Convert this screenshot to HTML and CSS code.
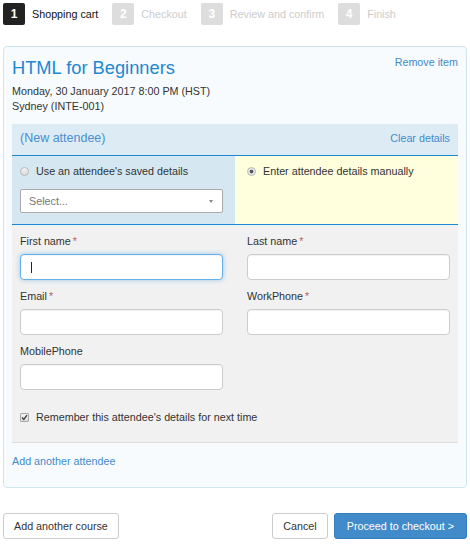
FILE: index.html
```html
<!DOCTYPE html>
<html lang="en">
<head>
  <meta charset="UTF-8" />
  <meta name="viewport" content="width=device-width, initial-scale=1.0" />
  <title>Shopping cart</title>
  <link rel="stylesheet" href="styles.css">
</head>
<body>
  <div class="steps">
    <div class="step active"><span class="step-num">1</span>Shopping cart</div>
    <div class="step"><span class="step-num">2</span>Checkout</div>
    <div class="step"><span class="step-num">3</span>Review and confirm</div>
    <div class="step"><span class="step-num">4</span>Finish</div>
  </div>

  <div class="cart-item">
    <div class="item-head">
      <h2 class="course-title">HTML for Beginners</h2>
      <a class="link remove-link" href="#">Remove item</a>
    </div>
    <div class="meta first">Monday, 30 January 2017 8:00 PM (HST)</div>
    <div class="meta">Sydney (INTE-001)</div>

    <div class="attendee">
      <div class="attendee-head">
        <span class="attendee-name">(New attendee)</span>
        <a class="link" href="#">Clear details</a>
      </div>

      <div class="source">
        <div class="source-pane saved">
          <label class="choice"><span class="radio"></span>Use an attendee's saved details</label>
          <div class="select">
            <span>Select...</span>
            <span class="select-arrow"></span>
          </div>
        </div>
        <div class="source-pane manual">
          <label class="choice"><span class="radio checked"></span>Enter attendee details manually</label>
        </div>
      </div>

      <!-- attendee fields -->
      <div class="details">
        <div class="field-grid">
          <div class="field">
            <label>First name<span class="req">*</span></label>
            <span class="input-wrap has-cursor"><input type="text" class="input focused" /></span>
          </div>
          <div class="field">
            <label>Last name<span class="req">*</span></label>
            <input type="text" class="input" />
          </div>
          <div class="field">
            <label>Email<span class="req">*</span></label>
            <input type="text" class="input" />
          </div>
          <div class="field">
            <label>WorkPhone<span class="req">*</span></label>
            <input type="text" class="input" />
          </div>
          <div class="field">
            <label>MobilePhone</label>
            <input type="text" class="input" />
          </div>
        </div>
        <label class="choice remember">
          <span class="checkbox">
            <svg width="7" height="7" viewBox="0 0 7 7"><path d="M1 3.6 L2.8 5.4 L6 1.2" fill="none" stroke="#444" stroke-width="1.4"/></svg>
          </span>Remember this attendee's details for next time
        </label>
      </div>
    </div>

    <a class="link add-attendee" href="#">Add another attendee</a>
  </div>

  <div class="actions">
    <button class="btn">Add another course</button>
    <div class="actions-right">
      <button class="btn">Cancel</button>
      <button class="btn btn-primary">Proceed to checkout &gt;</button>
    </div>
  </div>
</body>
</html>
```

FILE: styles.css
```css
body {
  margin: 0;
  padding: 3px;
  font-family: "Liberation Sans", Arial, sans-serif;
  font-size: 10.75px;
  color: #333;
  background: #fff;
}

a {
  text-decoration: none;
}

.link {
  color: #428bca;
}

/* progress steps */
.steps {
  display: flex;
  height: 22px;
}

.step {
  display: flex;
  align-items: center;
  flex: none;
  margin-right: 14px;
  line-height: 22px;
  color: #ccc;
}

.step-num {
  flex: none;
  width: 22px;
  height: 22px;
  margin-right: 7px;
  border-radius: 2px;
  background: #ddd;
  color: #fff;
  font-size: 12px;
  font-weight: bold;
  text-align: center;
}

.step.active {
  color: #111;
}

.step.active .step-num {
  background: #222;
}

/* cart item card */
.cart-item {
  margin-top: 21px;
  padding: 8px;
  border: 1px solid #cfe5f0;
  border-radius: 4px;
  background: #f7fbfd;
}

.item-head {
  display: flex;
  justify-content: space-between;
  align-items: flex-start;
}

.course-title {
  margin: 0;
  font-size: 18.3px;
  font-weight: normal;
  line-height: 26px;
  color: #1e88d0;
}

.remove-link {
  padding-top: 1px;
  line-height: 13px;
}

.meta {
  line-height: 15px;
}

.meta.first {
  margin-top: 3px;
}

.attendee {
  margin-top: 10px;
}

.attendee-head {
  display: flex;
  justify-content: space-between;
  align-items: baseline;
  padding: 7px 8px 9px;
  background: #ddebf5;
  border-bottom: 1px solid #1a88d0;
}

.attendee-name {
  font-size: 12.5px;
  line-height: 15px;
  color: #4a8fd0;
}

.source {
  display: grid;
  grid-template-columns: 1fr 1fr;
  border-bottom: 1px solid #1a88d0;
}

.source-pane {
  padding: 8px 12px 11px 8px;
}

.source-pane.saved {
  background: #d5e8f1;
}

.source-pane.manual {
  padding-left: 12px;
  background: #ffffdd;
}

.choice {
  display: flex;
  align-items: center;
  line-height: 15px;
  color: #333;
}

.radio {
  box-sizing: border-box;
  width: 9px;
  height: 9px;
  margin-right: 7px;
  border: 1px solid #b8b8b8;
  border-radius: 50%;
  background: linear-gradient(#f4f4f4, #dadada);
}

.radio.checked {
  background: radial-gradient(circle, #555 0, #555 1.6px, #e6e6e6 2.2px);
}

.select {
  box-sizing: border-box;
  display: flex;
  justify-content: space-between;
  align-items: center;
  height: 24px;
  margin-top: 10px;
  padding: 0 9px 0 8px;
  border: 1px solid #aaa;
  border-radius: 2px;
  background: #fff;
  color: #777;
}

.select-arrow {
  width: 0;
  height: 0;
  border-left: 2.5px solid transparent;
  border-right: 2.5px solid transparent;
  border-top: 3px solid #888;
}

/* attendee fields */
.details {
  padding: 9px 8px 17px;
  background: #f1f1f1;
  border-bottom: 1px solid #ddd;
}

.field-grid {
  display: grid;
  grid-template-columns: 1fr 1fr;
  column-gap: 24px;
  row-gap: 9px;
}

.field label {
  display: block;
  margin-bottom: 5px;
  line-height: 15px;
  color: #333;
}

.req {
  margin-left: 2px;
  color: #c0625f;
}

.input {
  box-sizing: border-box;
  display: block;
  width: 100%;
  height: 26px;
  margin: 0;
  padding: 0 8px;
  border: 1px solid #ccc;
  border-radius: 4px;
  background: #fff;
  box-shadow: inset 0 1px 1px rgba(0, 0, 0, 0.05);
  font: inherit;
}

.input.focused {
  border-color: #66afe9;
  outline: none;
  box-shadow: inset 0 1px 1px rgba(0, 0, 0, 0.05), 0 0 5px rgba(102, 175, 233, 0.6);
}

.input-wrap {
  position: relative;
  display: block;
}

.has-cursor::after {
  content: "";
  position: absolute;
  left: 11px;
  top: 8px;
  width: 1px;
  height: 11px;
  background: #222;
}

.remember {
  margin-top: 20px;
}

.checkbox {
  box-sizing: border-box;
  display: flex;
  align-items: center;
  justify-content: center;
  width: 9px;
  height: 9px;
  margin-right: 7px;
  border: 1px solid #aaa;
  border-radius: 1px;
  background: linear-gradient(#f0f0f0, #dcdcdc);
}

.add-attendee {
  display: block;
  margin: 12px 0 11px;
  line-height: 13px;
}

/* bottom buttons */
.actions {
  display: flex;
  margin-top: 25px;
}

.actions-right {
  display: flex;
  gap: 6px;
  margin-left: auto;
}

.btn {
  height: 26px;
  padding: 0 10px;
  border: 1px solid #ccc;
  border-radius: 3px;
  background: #fff;
  color: #333;
  font: inherit;
  cursor: pointer;
}

.btn-primary {
  padding: 0 12px;
  background: #428bca;
  border-color: #357ebd;
  color: #fff;
}
```
